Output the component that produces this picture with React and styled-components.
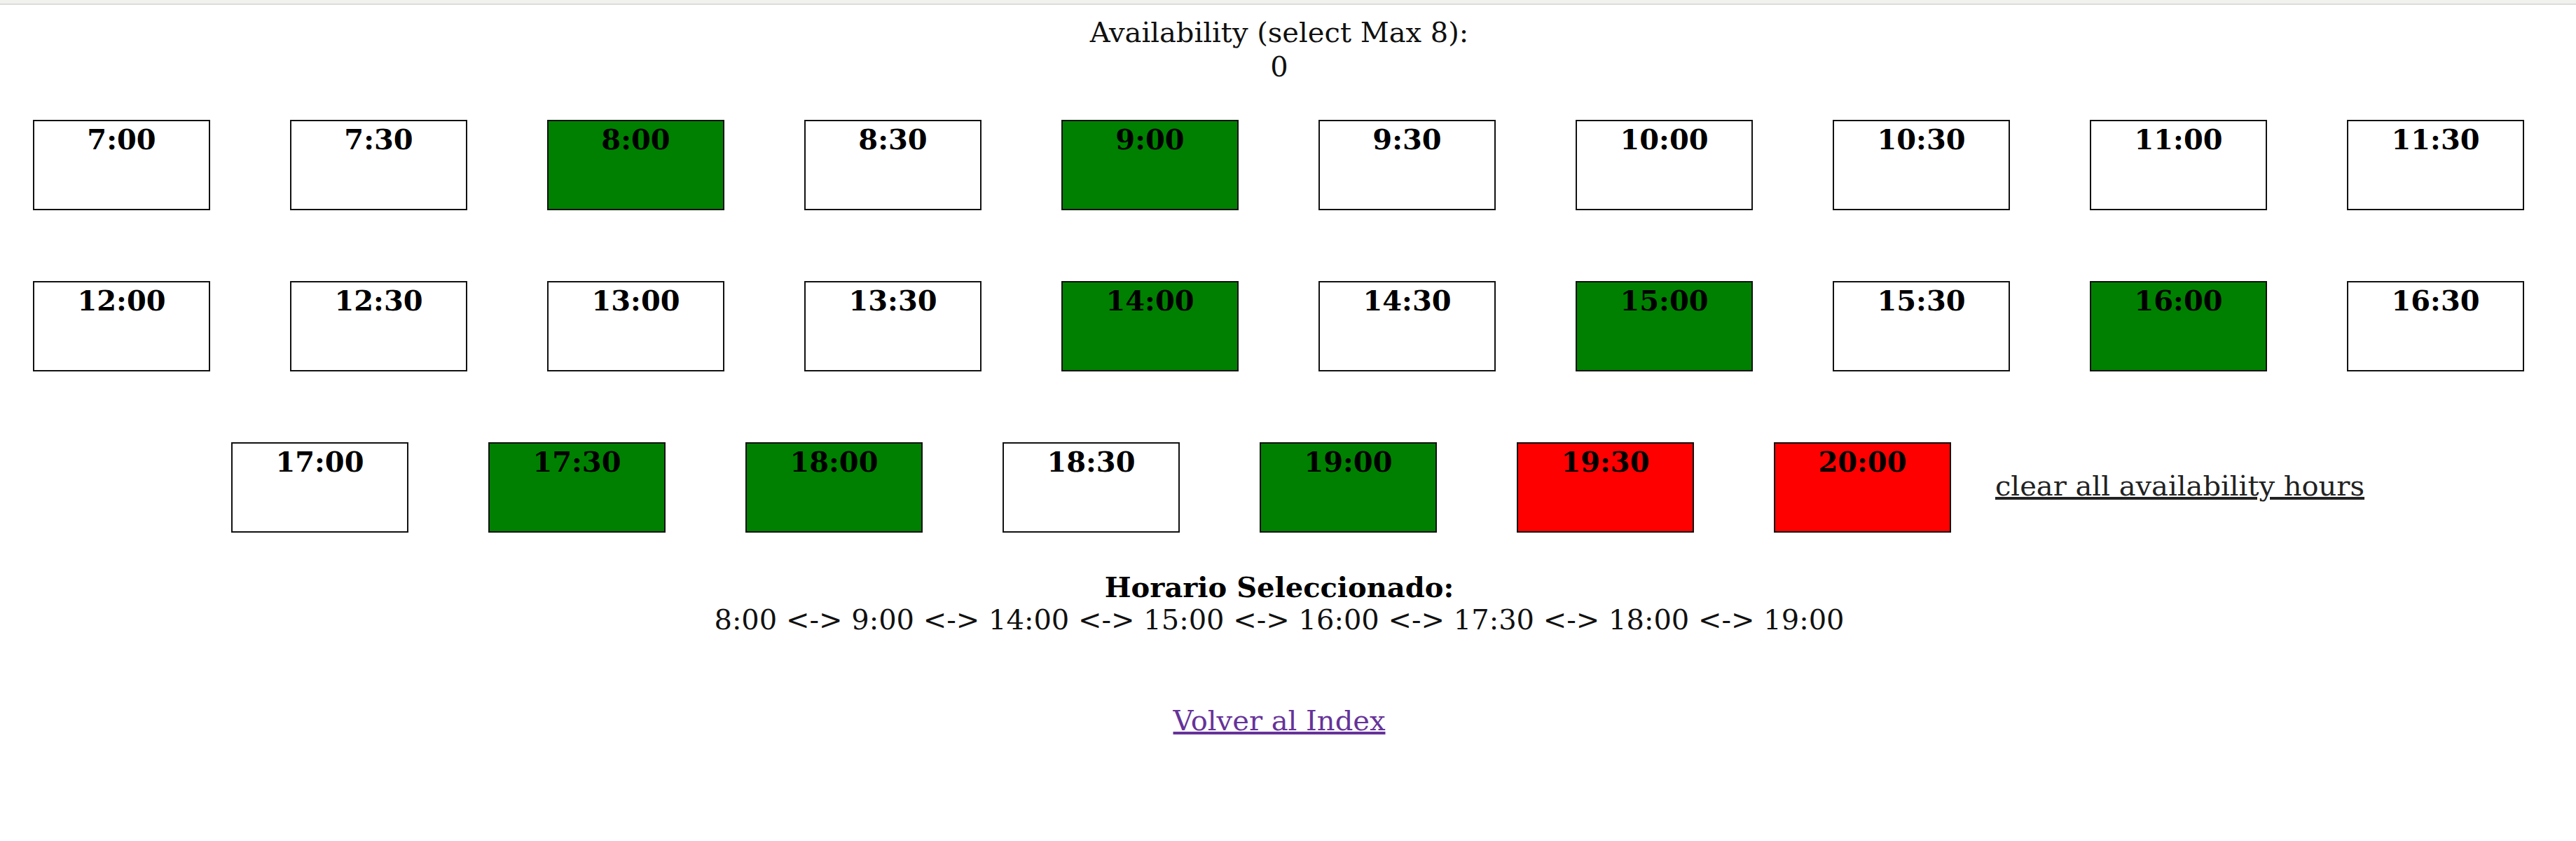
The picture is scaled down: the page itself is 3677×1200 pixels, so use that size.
import React from "react";
import styled, { createGlobalStyle } from "styled-components";

const GlobalStyle = createGlobalStyle`
  html, body {
    margin: 0;
    padding: 0;
    background: #fff;
  }
  body {
    font-family: "DejaVu Serif", "Liberation Serif", serif;
    font-size: 40px;
    color: #111;
  }
`;

const rows = [
  ["7:00", "7:30", "8:00", "8:30", "9:00", "9:30", "10:00", "10:30", "11:00", "11:30"],
  ["12:00", "12:30", "13:00", "13:30", "14:00", "14:30", "15:00", "15:30", "16:00", "16:30"],
  ["17:00", "17:30", "18:00", "18:30", "19:00", "19:30", "20:00"],
];

const selected = ["8:00", "9:00", "14:00", "15:00", "16:00", "17:30", "18:00", "19:00"];
const blocked = ["19:30", "20:00"];

const colors = {
  free: "#ffffff",
  selected: "#008000",
  blocked: "#ff0000",
};

function slotState(time) {
  if (selected.includes(time)) return "selected";
  if (blocked.includes(time)) return "blocked";
  return "free";
}

export default function App() {
  return (
    <Page>
      <GlobalStyle />
      <TopBar />
      <Content>
        <Header>
          <div>Availability (select Max 8):</div>
          <div>0</div>
        </Header>
        <Grid>
          <Row padRight="2px">
            <Slots>
              {rows[0].map((t) => (
                <Slot key={t} bg={colors[slotState(t)]}>{t}</Slot>
              ))}
            </Slots>
          </Row>
          <Row padRight="2px">
            <Slots>
              {rows[1].map((t) => (
                <Slot key={t} bg={colors[slotState(t)]}>{t}</Slot>
              ))}
            </Slots>
          </Row>
          <Row padLeft="53px">
            <Slots>
              {rows[2].map((t) => (
                <Slot key={t} bg={colors[slotState(t)]}>{t}</Slot>
              ))}
            </Slots>
            <ClearLink href="#">clear all availability hours</ClearLink>
          </Row>
        </Grid>
        <Summary>
          <SummaryTitle>Horario Seleccionado:</SummaryTitle>
          <div>{selected.join(" <-> ")}</div>
        </Summary>
        <BackLink href="#">Volver al Index</BackLink>
      </Content>
    </Page>
  );
}

const Page = styled.div`
  width: 100%;
  min-height: 1200px;
`;

const TopBar = styled.div`
  height: 5px;
  background: #f1f1ef;
  border-bottom: 2px solid #dcdcd8;
`;

const Content = styled.div`
  display: flex;
  flex-direction: column;
  align-items: center;
  padding-right: 25px;
`;

const Header = styled.div`
  margin-top: 15px;
  text-align: center;
  line-height: 49px;
`;

const Grid = styled.div`
  align-self: stretch;
  display: flex;
  flex-direction: column;
  gap: 101px;
  margin-top: 51px;
`;

const Row = styled.div`
  display: flex;
  justify-content: center;
  align-items: center;
  gap: 63px;
  height: 129px;
  padding-left: ${(p) => p.padLeft || "0"};
  padding-right: ${(p) => p.padRight || "0"};
`;

const Slots = styled.div`
  display: flex;
  gap: 114px;
`;

const Slot = styled.div`
  box-sizing: border-box;
  width: 253px;
  height: 129px;
  border: 2px solid #111;
  background: ${(p) => p.bg};
  color: #000;
  font-weight: bold;
  text-align: center;
  padding-top: 2px;
  line-height: 47px;
`;

const ClearLink = styled.a`
  color: #222;
  text-decoration: underline;
  white-space: nowrap;
  margin-bottom: 5px;
`;

const Summary = styled.div`
  margin-top: 54px;
  text-align: center;
  line-height: 47px;
`;

const SummaryTitle = styled.div`
  font-weight: bold;
  color: #000;
`;

const BackLink = styled.a`
  margin-top: 97px;
  color: #663399;
  text-decoration: underline;
  line-height: 47px;
`;
